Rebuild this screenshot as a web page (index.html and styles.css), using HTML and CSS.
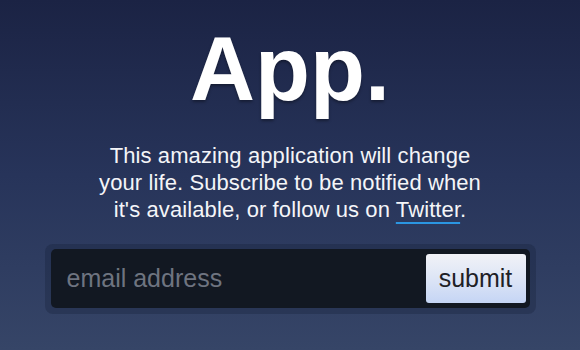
FILE: index.html
```html
<!DOCTYPE html>
<html>
<head>
<meta charset="utf-8">
<link rel="stylesheet" href="styles.css">
</head>
<body>
<main class="page">
  <h1 class="title">App.</h1>
  <p class="lead">This amazing application will change your life. Subscribe to be notified when it's available, or follow us on <a class="link" href="#">Twitter</a>.</p>
  <form class="signup">
    <div class="field">
      <input class="email" type="text" placeholder="email address">
      <button class="submit" type="button">submit</button>
    </div>
  </form>
</main>
</body>
</html>
```

FILE: styles.css
```css
html, body {
  margin: 0;
  padding: 0;
}
body {
  width: 580px;
  height: 350px;
  overflow: hidden;
  background: linear-gradient(to bottom, #1b2344 0%, #27345a 50%, #364567 100%);
  font-family: "Liberation Sans", Arial, sans-serif;
  color: #fff;
}
.page {
  display: flex;
  flex-direction: column;
  align-items: center;
  padding-top: 24px;
}
.title {
  margin: 0;
  font-size: 90px;
  line-height: 90px;
  font-weight: bold;
  text-shadow: 0 2px 3px rgba(0, 0, 0, 0.35);
}
.lead {
  margin: 28px 0 0;
  width: 400px;
  text-align: center;
  font-size: 22px;
  line-height: 27px;
  letter-spacing: 0.1px;
  color: #f4f5f8;
}
.link {
  color: #f4f5f8;
  text-decoration: underline;
  text-decoration-color: #2b96e2;
  text-decoration-thickness: 2px;
  text-underline-offset: 5px;
}
.signup {
  margin-top: 21px;
  padding: 5px 6px 6px;
  border-radius: 8px;
  background: rgba(10, 18, 36, 0.22);
}
.field {
  display: flex;
  width: 475px;
  padding: 5px 4px 5px 0;
  border-radius: 5px;
  background: #121822;
}
.email {
  flex: 1;
  min-width: 0;
  border: 0;
  outline: 0;
  background: transparent;
  padding: 0 0 0 16px;
  font-family: "Liberation Sans", Arial, sans-serif;
  font-size: 25px;
  color: #d0d4dc;
}
.email::placeholder {
  color: #6e7480;
}
.submit {
  width: 100px;
  height: 49px;
  border: 0;
  border-radius: 3px;
  background: linear-gradient(to bottom, #f1f2f7 0%, #dde5f6 50%, #c5d5f5 100%);
  font-family: "Liberation Sans", Arial, sans-serif;
  font-size: 25px;
  color: #1e2026;
  padding: 0;
}
```
